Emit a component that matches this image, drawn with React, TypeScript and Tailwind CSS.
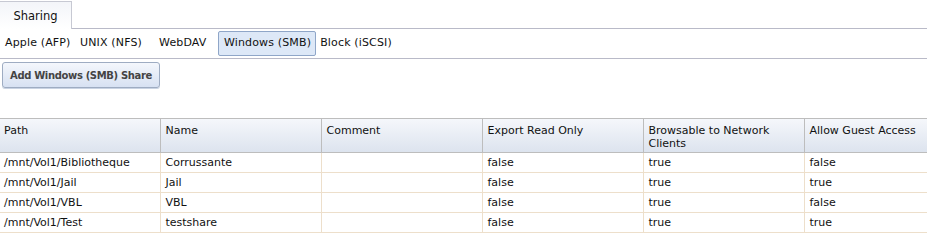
const font = { fontFamily: '"DejaVu Sans", Verdana, sans-serif' }

const rows = [
  ['/mnt/Vol1/Bibliotheque', 'Corrussante', '', 'false', 'true', 'false'],
  ['/mnt/Vol1/Jail', 'Jail', '', 'false', 'true', 'true'],
  ['/mnt/Vol1/VBL', 'VBL', '', 'false', 'true', 'false'],
  ['/mnt/Vol1/Test', 'testshare', '', 'false', 'true', 'true'],
]

const headers = [
  'Path',
  'Name',
  'Comment',
  'Export Read Only',
  'Browsable to Network Clients',
  'Allow Guest Access',
]

export default function App() {
  return (
    <div
      className="w-[927px] h-[236px] overflow-hidden bg-white text-[11px] text-[#111]"
      style={font}
    >
      {/* Top tab bar */}
      <div className="flex h-[29px] border-b border-[#b9bac8]">
        <div className="mt-[1px] -mb-px flex w-[72px] items-center justify-center border-t border-r border-[#c7c9d3] bg-gradient-to-b from-[#f3f5f9] to-white text-[11.5px] pt-[2px]">
          Sharing
        </div>
      </div>

      {/* Sub tabs */}
      <div className="flex h-[30px] items-center border-b border-[#b9bac8] whitespace-nowrap tracking-[0.15px]">
        <div className="ml-[5px] w-[75px]">Apple (AFP)</div>
        <div className="w-[79px]">UNIX (NFS)</div>
        <div className="w-[59px]">WebDAV</div>
        <div className="rounded-[2px] border border-[#8fa6c8] bg-[#dde8f7] px-[4px] py-[3px] pl-[5px]">
          Windows (SMB)
        </div>
        <div className="ml-[4px]">Block (iSCSI)</div>
      </div>

      {/* Add button */}
      <div className="px-[2px] pt-[3px]">
        <button className="h-[26px] w-[158px] whitespace-nowrap rounded-[3px] border border-[#9eacc2] bg-gradient-to-b from-[#f4f7fc] to-[#d7e1f2] font-bold text-[10px] tracking-[-0.35px] text-[#444] shadow-[0_1px_0_#c9d3e3]">
          Add Windows (SMB) Share
        </button>
      </div>

      {/* Table */}
      <table className="-ml-px mt-[30px] w-[966px] table-fixed border-collapse">
        <thead>
          <tr className="h-[34px] bg-gradient-to-b from-[#f5f7fb] to-[#dce3ee]">
            {headers.map((h) => (
              <th
                key={h}
                className="w-[161px] border-t border-b border-r border-[#bdbdbd] pl-[5px] pr-[4px] pt-[5px] align-top text-left font-normal leading-[13px]"
              >
                {h}
              </th>
            ))}
          </tr>
        </thead>
        <tbody>
          {rows.map((r, i) => (
            <tr key={i} className="h-[20px]">
              {r.map((c, j) => (
                <td
                  key={j}
                  className="border-b border-r border-[#eddfcb] pl-[5px] pr-[4px] leading-[13px]"
                >
                  {c}
                </td>
              ))}
            </tr>
          ))}
        </tbody>
      </table>
    </div>
  )
}
